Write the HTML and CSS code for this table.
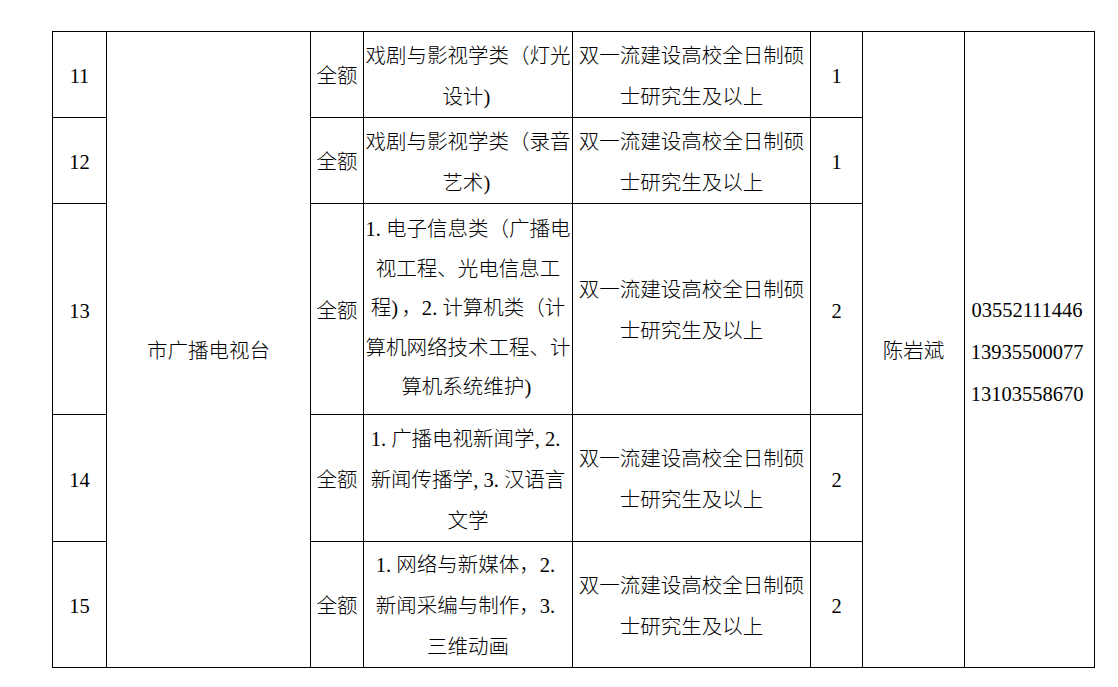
FILE: index.html
```html
<!DOCTYPE html>
<html lang="zh-CN">
<head>
<meta charset="utf-8">
<title>岗位表</title>
<link rel="stylesheet" href="styles.css">
</head>
<body>
<div class="sheet">
  <div class="cell num">11</div>
  <div class="cell unit span5">市广播电视台</div>
  <div class="cell">全额</div>
  <div class="cell major"><div class="in">戏剧与影视学类（灯光<br>设计<span class="hw">)</span></div></div>
  <div class="cell">双一流建设高校全日制硕<br>士研究生及以上</div>
  <div class="cell num">1</div>
  <div class="cell span5">陈岩斌</div>
  <div class="cell phones span5">03552111446<br>13935500077<br>13103558670</div>

  <div class="cell num">12</div>
  <div class="cell">全额</div>
  <div class="cell major"><div class="in">戏剧与影视学类（录音<br>艺术<span class="hw">)</span></div></div>
  <div class="cell">双一流建设高校全日制硕<br>士研究生及以上</div>
  <div class="cell num">1</div>

  <div class="cell num">13</div>
  <div class="cell">全额</div>
  <div class="cell major tall"><div class="in">1<span class="hw">.</span>电子信息类（广播电<br>视工程、光电信息工<br>程<span class="hw">)</span>，2<span class="hw">.</span>计算机类（计<br>算机网络技术工程、计<br>算机系统维护<span class="hw">)</span></div></div>
  <div class="cell">双一流建设高校全日制硕<br>士研究生及以上</div>
  <div class="cell num">2</div>

  <div class="cell num">14</div>
  <div class="cell">全额</div>
  <div class="cell major"><div class="in">1<span class="hw">.</span>广播电视新闻学<span class="hw">,</span>2<span class="hw">.</span><br>新闻传播学<span class="hw">,</span>3<span class="hw">.</span>汉语言<br>文学</div></div>
  <div class="cell">双一流建设高校全日制硕<br>士研究生及以上</div>
  <div class="cell num">2</div>

  <div class="cell num">15</div>
  <div class="cell">全额</div>
  <div class="cell major"><div class="in">1<span class="hw">.</span>网络与新媒体，2<span class="hw">.</span><br>新闻采编与制作，3<span class="hw">.</span><br>三维动画</div></div>
  <div class="cell">双一流建设高校全日制硕<br>士研究生及以上</div>
  <div class="cell num">2</div>
</div>
</body>
</html>
```
FILE: styles.css
```css
html, body {
  margin: 0;
  padding: 0;
  background: #ffffff;
}

body {
  padding: 31px 0 0 52px;
  font-family: "Liberation Serif", "Noto Sans CJK SC", serif;
  font-weight: 300;
  font-size: 20.5px;
  color: #000000;
}

.sheet {
  display: grid;
  grid-template-columns: 54px 204px 53px 209px 238px 52px 102px 130px;
  grid-template-rows: 86px 86px 211px 127px 126px;
  width: 1043px;
  box-sizing: border-box;
  border-left: 1px solid #000;
  border-top: 1px solid #000;
}

.cell {
  box-sizing: border-box;
  border-right: 1px solid #000;
  border-bottom: 1px solid #000;
  display: flex;
  align-items: center;
  justify-content: center;
  text-align: center;
  white-space: nowrap;
  line-height: 41px;
  padding-top: 4px;
  overflow: visible;
}

.in {
  text-align: center;
}

.span5 {
  grid-row: span 5;
}

.tall {
  line-height: 39.5px;
  padding-top: 0;
}

.hw {
  display: inline-block;
  width: 0.5em;
  text-align: left;
}

.phones {
  line-height: 42px;
  padding-right: 5px;
}
```
